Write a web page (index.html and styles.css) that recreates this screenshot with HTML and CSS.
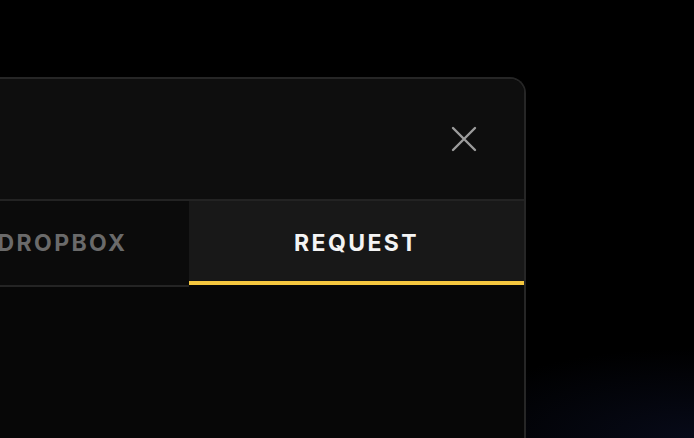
FILE: index.html
```html
<!DOCTYPE html>
<html lang="en">
<head>
<meta charset="utf-8">
<title>Upload</title>
<link rel="stylesheet" href="styles.css">
</head>
<body>
<div class="backdrop">
  <section class="modal">
    <header class="modal-header">
      <button class="close" aria-label="Close">
        <svg width="28" height="28" viewBox="0 0 28 28" fill="none" stroke="currentColor" stroke-width="2.4" stroke-linecap="round">
          <path d="M3 3 L25 25 M25 3 L3 25"/>
        </svg>
      </button>
    </header>
    <nav class="tabs">
      <div class="tab">DROPBOX</div>
      <div class="tab active">REQUEST</div>
    </nav>
    <div class="modal-body"></div>
  </section>
</div>
</body>
</html>
```

FILE: styles.css
```css
html, body {
  margin: 0;
  padding: 0;
  height: 100%;
  overflow: hidden;
  background: #000;
  font-family: Inter, "Noto Sans", sans-serif;
}
.backdrop {
  position: relative;
  width: 100%;
  height: 100%;
  background:
    radial-gradient(ellipse 260px 90px at 100% 100%, rgba(14, 20, 48, 0.5), rgba(0, 0, 0, 0) 100%),
    #000;
}
.modal {
  position: absolute;
  left: -66px;
  top: 77px;
  bottom: 0;
  width: 592px;
  box-sizing: border-box;
  border: 2px solid #262626;
  border-bottom: 0;
  border-radius: 16px 16px 0 0;
  background: #070707;
  overflow: hidden;
  display: flex;
  flex-direction: column;
}
.modal-header {
  height: 120px;
  flex: none;
  background: #0e0e0e;
  display: flex;
  justify-content: flex-end;
  align-items: center;
  padding-right: 46px;
  border-bottom: 2px solid #232323;
}
.close {
  background: none;
  border: 0;
  padding: 0;
  color: #9c9c9c;
  display: flex;
  cursor: pointer;
}
.tabs {
  display: grid;
  grid-template-columns: 253px 1fr;
  flex: none;
}
.tab {
  height: 84px;
  display: flex;
  align-items: center;
  justify-content: center;
  font-size: 23px;
  font-weight: 700;
  letter-spacing: 2.4px;
  color: #6a6a6a;
  background: #0b0b0b;
  border-bottom: 2px solid #242424;
}
.tab.active {
  color: #f4f4f4;
  background: #181818;
  box-shadow: inset 0 -4px 0 #f5c73f;
  border-bottom-color: #070707;
}
.modal-body {
  flex: 1;
  background: #070707;
}
```
